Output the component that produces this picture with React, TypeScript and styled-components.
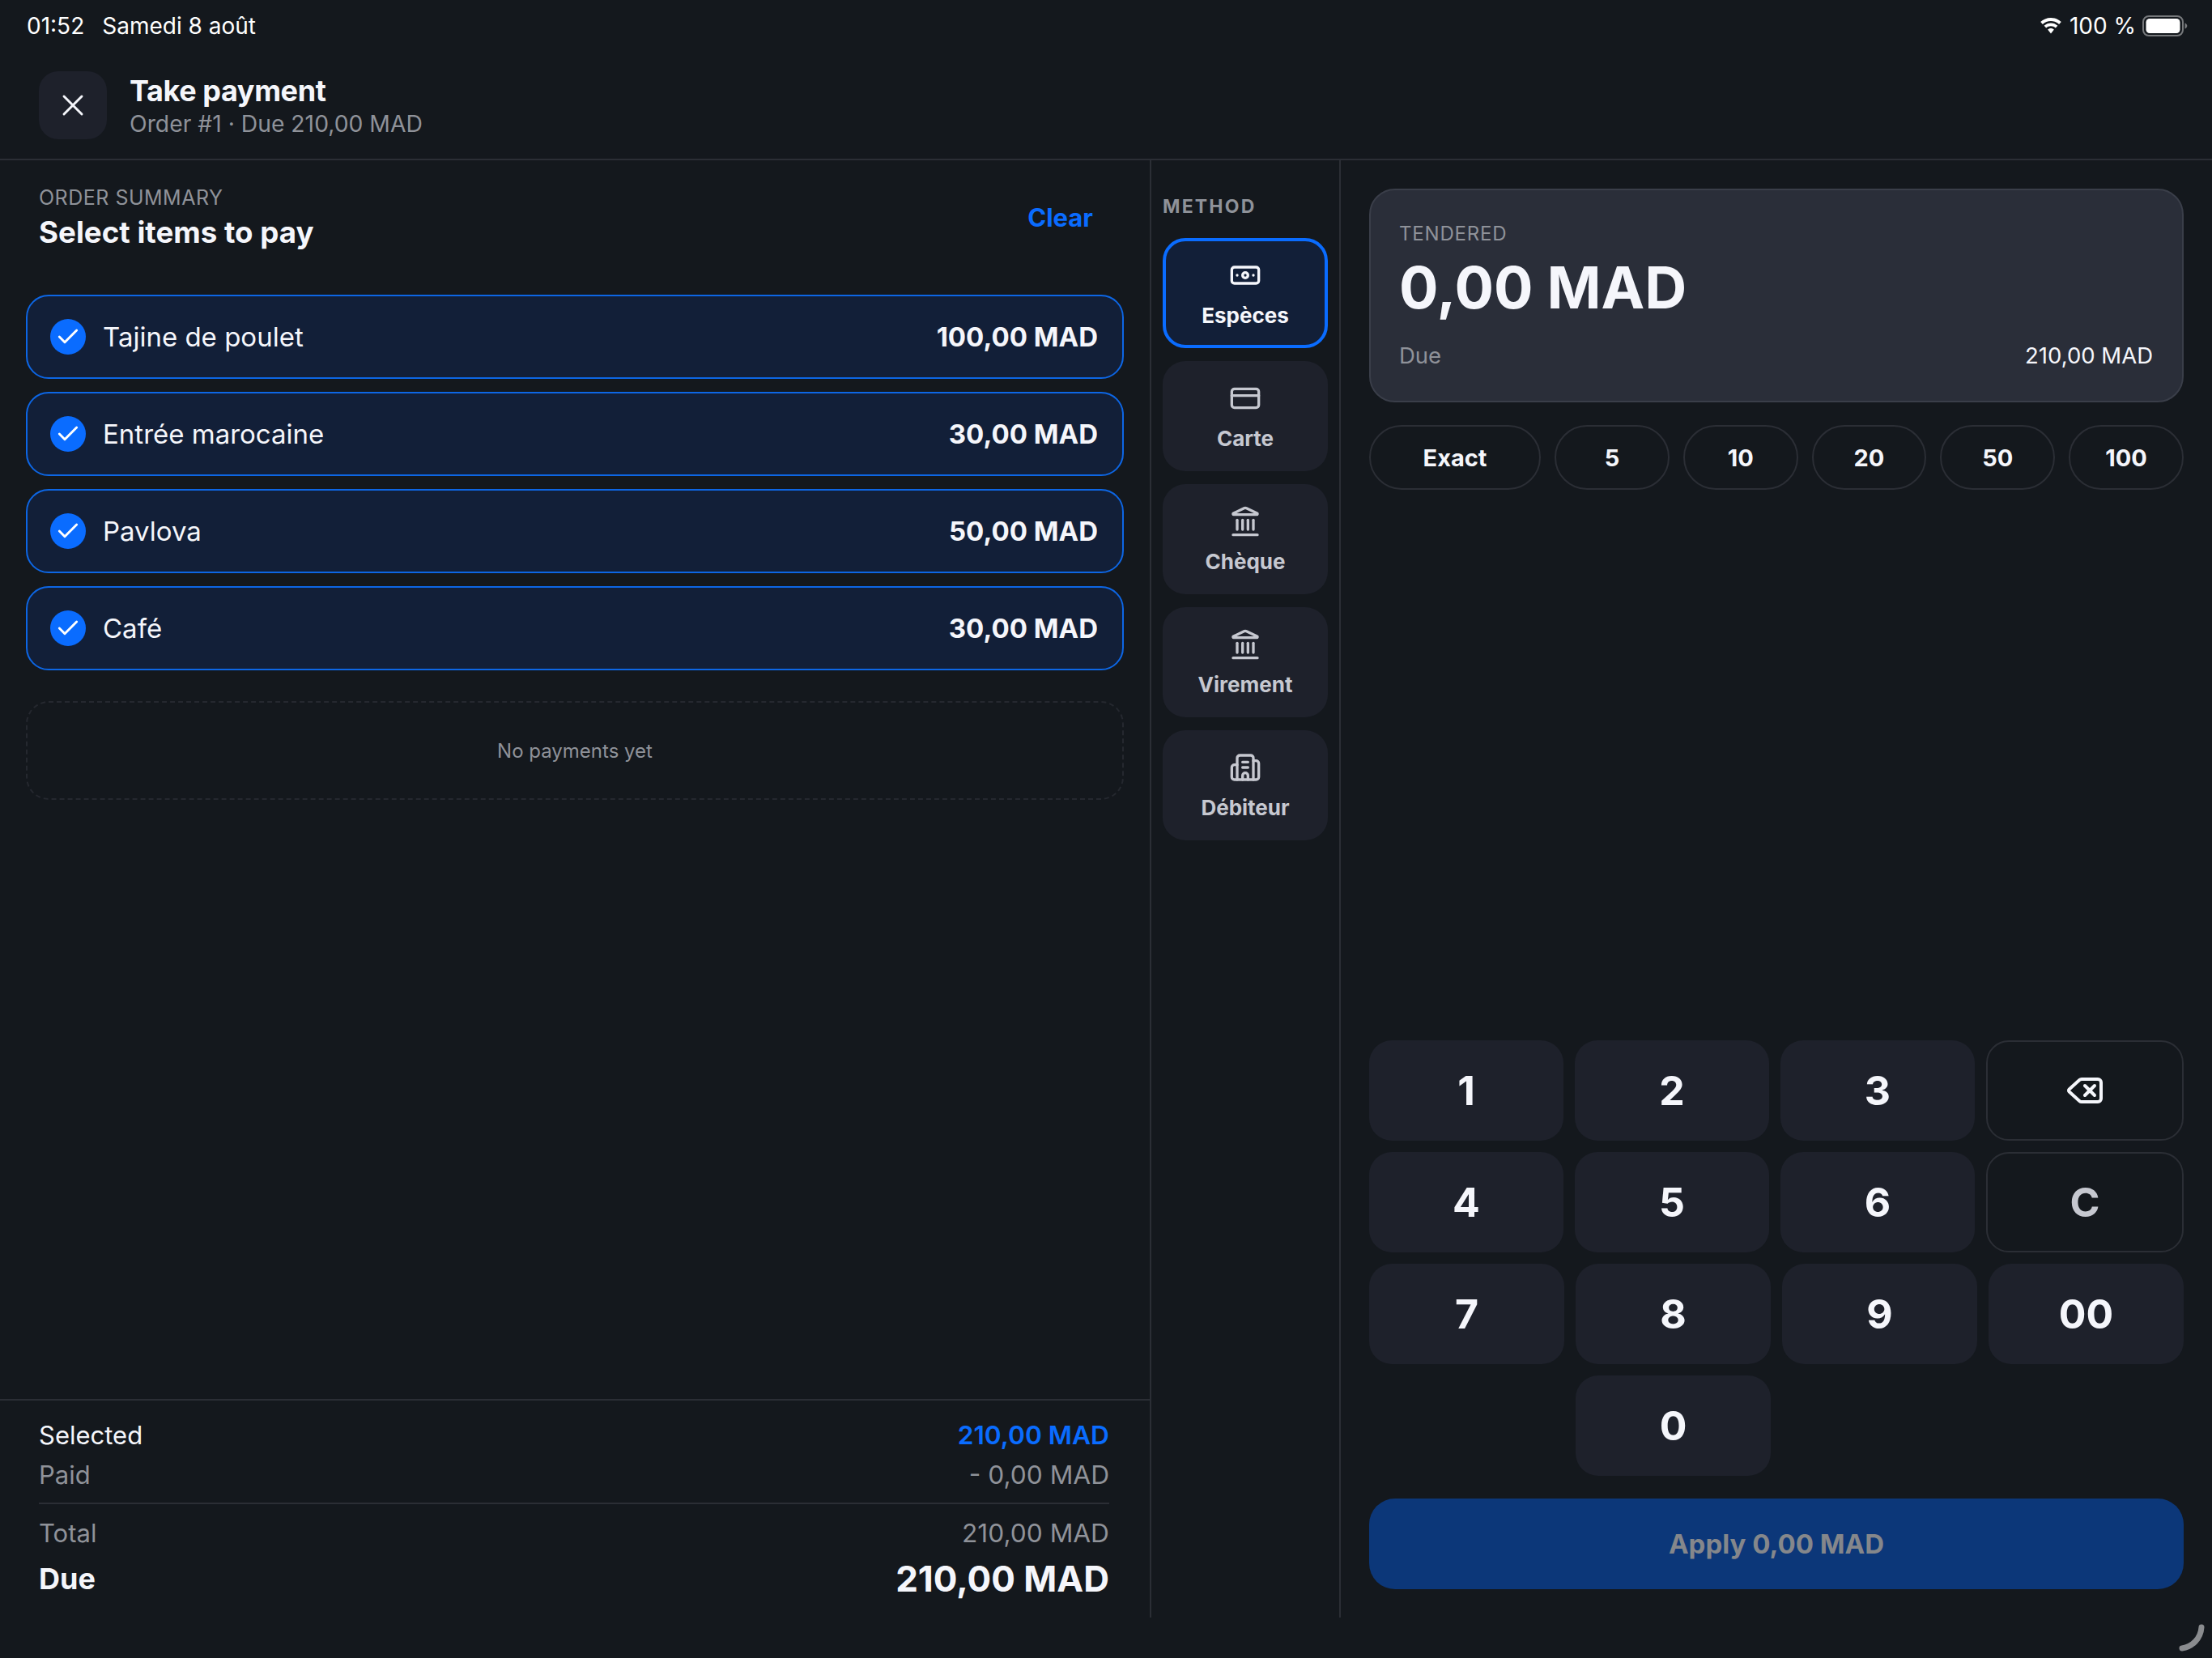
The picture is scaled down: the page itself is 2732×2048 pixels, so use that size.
import React from "react";
import styled, { createGlobalStyle } from "styled-components";
import { Banknote, Building2, Check, CreditCard, Delete, Landmark, X } from "lucide-react";

const Global = createGlobalStyle`
  html, body { margin: 0; padding: 0; background: #14181d; }
  * { box-sizing: border-box; }
`;

const Page = styled.div`
  width: 2732px; height: 2048px; background: #14181d; color: #f5f6fb; overflow: hidden;
  display: flex; flex-direction: column; position: relative;
  font-family: Inter, "Liberation Sans", sans-serif;
`;
const StatusBar = styled.div`
  height: 64px; padding: 0 30px 0 33px; display: flex; align-items: center; justify-content: space-between;
  font-size: 28px; color: #fff;
`;
const StatusGroup = styled.div`display: flex; align-items: center; gap: ${p => p.$gap}px;`;
const Header = styled.header`
  height: 134px; padding: 24px 48px 0; display: flex; gap: 28px; align-items: flex-start;
  border-bottom: 2px solid #2b2e35;
`;
const CloseButton = styled.div`
  width: 84px; height: 84px; border-radius: 24px; background: #1e212b; display: flex; align-items: center; justify-content: center;
`;
const HeaderText = styled.div`display: flex; flex-direction: column; padding-top: 2px;`;
const Title = styled.div`font-size: 36px; line-height: 44px; font-weight: 700; letter-spacing: -0.4px;`;
const Sub = styled.div`font-size: 28.3px; line-height: 38px; color: #8f9299;`;
const Main = styled.main`flex: none; height: 1800px; display: flex;`;
const LeftPanel = styled.section`
  width: 1422px; border-right: 2px solid #2b2e35; display: flex; flex-direction: column;
`;
const SummaryHead = styled.div`
  height: 166px; padding: 30px 70px 0 48px; display: flex; justify-content: space-between; align-items: flex-start;
`;
const Eyebrow = styled.div`font-size: 25px; line-height: 32px; letter-spacing: 0.5px; color: #8f9299;`;
const SummaryTitle = styled.div`font-size: 36.7px; line-height: 46px; font-weight: 700; margin-top: 4px;`;
const ClearLink = styled.div`font-size: 31px; font-weight: 700; color: #0a6cff; margin-top: 22px;`;
const Rows = styled.div`padding: 0 32px; display: flex; flex-direction: column; gap: 16px;`;
const Row = styled.div`
  height: 104px; border: 2px solid #0d66e4; border-radius: 28px; background: #121f38;
  display: flex; align-items: center; padding: 0 30px 0 28px;
`;
const CheckDot = styled.span`
  width: 44px; height: 44px; border-radius: 50%; background: #0a6cff; display: flex; align-items: center; justify-content: center;
`;
const RowName = styled.span`font-size: 33px; margin-left: 21px; flex: 1;`;
const RowPrice = styled.span`font-size: 33px; font-weight: 700;`;
const EmptyBox = styled.div`
  margin: 38px 32px 0; height: 122px; border: 2px dashed #25282f; border-radius: 28px;
  display: flex; align-items: center; justify-content: center; font-size: 24px; color: #8f9299;
`;
const Totals = styled.div`
  margin-top: auto; border-top: 2px solid #2b2e35; height: 270px; padding: 18px 50px 0 48px; display: flex; flex-direction: column;
`;
const TotalRow = styled.div`
  display: flex; justify-content: space-between; align-items: center; height: ${p => p.$h}px;
  font-size: ${p => p.$size}px; font-weight: ${p => p.$weight || 400}; color: ${p => p.$color || "#8f9299"};
`;
const Amount = styled.span`
  font-size: ${p => p.$size || 31.7}px; font-weight: ${p => p.$weight || 400}; color: ${p => p.$color || "inherit"};
`;
const TotalRule = styled.div`height: 2px; background: #2b2e35; margin: 10px 0 11px;`;
const MethodPanel = styled.aside`
  width: 234px; border-right: 2px solid #2b2e35; padding: 43px 14px 0 14px; display: flex; flex-direction: column;
`;
const MethodLabel = styled.div`
  font-size: 23px; line-height: 28px; font-weight: 700; letter-spacing: 2.2px; color: #8f9299; margin-bottom: 25px;
`;
const MethodList = styled.div`display: flex; flex-direction: column; gap: 16px;`;
const MethodButton = styled.div`
  width: 204px; height: 136px; border-radius: 28px; display: flex; flex-direction: column; align-items: center; justify-content: center; gap: 14px;
  background: ${p => p.$active ? "#121f38" : "#1e212b"};
  border: ${p => p.$active ? "4px solid #0a6cff" : "none"};
  color: ${p => p.$active ? "#f5f6fb" : "#c6c8d0"};
  font-size: 26px; font-weight: 700;
`;
const PadPanel = styled.section`flex: 1; padding: 35px 35px 0; display: flex; flex-direction: column;`;
const TenderCard = styled.div`
  height: 264px; border: 2px solid #3a3e49; border-radius: 32px; background: #2a2e39; padding: 38px 36px 0 35px;
  display: flex; flex-direction: column;
`;
const TenderLabel = styled.div`font-size: 24px; line-height: 32px; letter-spacing: 0.8px; color: #8f9299;`;
const TenderValue = styled.div`font-size: 72px; line-height: 92px; font-weight: 700; margin-top: 4px;`;
const TenderDue = styled.div`display: flex; justify-content: space-between; font-size: 27.5px; line-height: 38px; margin-top: 19px; color: #8f9299;`;
const TenderAmount = styled.span`color: #f5f6fb;`;
const Chips = styled.div`display: flex; gap: 17px; margin-top: 28px;`;
const Chip = styled.div`
  flex: ${p => p.$wide ? "0 0 212px" : "1"}; height: 80px; border: 2px solid #2b2e35; border-radius: 40px;
  display: flex; align-items: center; justify-content: center; font-size: 29px; font-weight: 700;
`;
const Keypad = styled.div`margin-top: auto; display: flex; flex-direction: column; gap: 14px;`;
const KeyRow = styled.div`display: flex; gap: 14px; height: 124px;`;
const Key = styled.div`
  flex: 1 1 0; border-radius: 28px; display: flex; align-items: center; justify-content: center; font-size: 50px; font-weight: 700;
  background: ${p => p.$ghost ? "transparent" : "#1e212b"};
  border: ${p => p.$ghost ? "2px solid #2b2e35" : "none"};
  color: ${p => p.$dim ? "#c6c8d0" : "#f5f6fb"};
`;
const KeySpacer = styled.div`flex: 1 1 0;`;
const ApplyButton = styled.div`
  height: 112px; margin-top: 28px; margin-bottom: 35px; border-radius: 32px; background: #0c3779; color: #85878b;
  display: flex; align-items: center; justify-content: center; font-size: 33px; font-weight: 700;
`;
const HomeArc = styled.svg`position: absolute; right: 8px; bottom: 6px;`;

const WifiIcon = () => (
  <svg width="30" height="22" viewBox="0 0 30 22" fill="#fff">
    <path d="M15 4.900c3.900 0 7.400 1.500 10.100 4l2.700-2.800C24.500 2.900 20 .900 15 .900S5.500 2.900 2.200 6.100l2.700 2.800c2.700-2.500 6.200-4 10.100-4z" />
    <path d="M15 11.300c2.200 0 4.200.8 5.800 2.200l2.600-2.700C21.100 8.700 18.200 7.500 15 7.500s-6.100 1.200-8.400 3.300l2.600 2.700c1.600-1.400 3.600-2.200 5.800-2.200z" />
    <path d="M15 14.100c-1.500 0-2.900.6-3.900 1.500L15 20.500l3.900-4.900c-1-.9-2.400-1.500-3.900-1.500z" />
  </svg>
);
const BatteryIcon = () => (
  <svg width="56" height="26" viewBox="0 0 56 26">
    <rect x="1" y="1" width="49" height="24" rx="7" fill="none" stroke="#77797c" strokeWidth="2" />
    <rect x="4.500" y="4" width="42" height="18" rx="4.500" fill="#fff" />
    <path d="M52.500 9.500c1.800.6 2.800 2 2.800 3.500s-1 2.900-2.800 3.500z" fill="#77797c" />
  </svg>
);

const items = [
  ["Tajine de poulet", "100,00 MAD"],
  ["Entrée marocaine", "30,00 MAD"],
  ["Pavlova", "50,00 MAD"],
  ["Café", "30,00 MAD"],
];
const methods = [
  { label: "Espèces", Icon: Banknote, active: true },
  { label: "Carte", Icon: CreditCard },
  { label: "Chèque", Icon: Landmark },
  { label: "Virement", Icon: Landmark },
  { label: "Débiteur", Icon: Building2 },
];
const chips = ["5", "10", "20", "50", "100"];

export default function App() {
  return (
    <Page>
      <Global />
      <StatusBar>
        <StatusGroup $gap={22}><span>01:52</span><span>Samedi 8 août</span></StatusGroup>
        <StatusGroup $gap={8}><WifiIcon /><span>100 %</span><BatteryIcon /></StatusGroup>
      </StatusBar>
      <Header>
        <CloseButton><X size={44} strokeWidth={1.6} color="#f5f6fb" /></CloseButton>
        <HeaderText>
          <Title>Take payment</Title>
          <Sub>Order #1 · Due 210,00 MAD</Sub>
        </HeaderText>
      </Header>
      <Main>
        <LeftPanel>
          <SummaryHead>
            <div>
              <Eyebrow>ORDER SUMMARY</Eyebrow>
              <SummaryTitle>Select items to pay</SummaryTitle>
            </div>
            <ClearLink>Clear</ClearLink>
          </SummaryHead>
          <Rows>
            {items.map(([name, price]) => (
              <Row key={name}>
                <CheckDot><Check size={32} strokeWidth={2.200} color="#fff" /></CheckDot>
                <RowName>{name}</RowName>
                <RowPrice>{price}</RowPrice>
              </Row>
            ))}
          </Rows>
          <EmptyBox>No payments yet</EmptyBox>
          <Totals>
            <TotalRow $h={48} $size={31} $color="#f5f6fb"><span>Selected</span><Amount $weight={600} $color="#0a6cff">210,00 MAD</Amount></TotalRow>
            <TotalRow $h={50} $size={31}><span>Paid</span><Amount>- 0,00 MAD</Amount></TotalRow>
            <TotalRule />
            <TotalRow $h={48} $size={31}><span>Total</span><Amount>210,00 MAD</Amount></TotalRow>
            <TotalRow $h={66} $size={36} $weight={700} $color="#f5f6fb"><span>Due</span><Amount $size={44} $weight={700}>210,00 MAD</Amount></TotalRow>
          </Totals>
        </LeftPanel>
        <MethodPanel>
          <MethodLabel>METHOD</MethodLabel>
          <MethodList>
            {methods.map(({ label, Icon, active }) => (
              <MethodButton key={label} $active={active}>
                <Icon size={40} strokeWidth={2} />
                <span>{label}</span>
              </MethodButton>
            ))}
          </MethodList>
        </MethodPanel>
        <PadPanel>
          <TenderCard>
            <TenderLabel>TENDERED</TenderLabel>
            <TenderValue>0,00 MAD</TenderValue>
            <TenderDue><span>Due</span><TenderAmount>210,00 MAD</TenderAmount></TenderDue>
          </TenderCard>
          <Chips>
            <Chip $wide>Exact</Chip>
            {chips.map(c => <Chip key={c}>{c}</Chip>)}
          </Chips>
          <Keypad>
            <KeyRow><Key>1</Key><Key>2</Key><Key>3</Key><Key $ghost><Delete size={48} strokeWidth={2} /></Key></KeyRow>
            <KeyRow><Key>4</Key><Key>5</Key><Key>6</Key><Key $ghost $dim>C</Key></KeyRow>
            <KeyRow><Key>7</Key><Key>8</Key><Key>9</Key><Key>00</Key></KeyRow>
            <KeyRow><KeySpacer /><Key>0</Key><KeySpacer /><KeySpacer /></KeyRow>
          </Keypad>
          <ApplyButton>Apply 0,00 MAD</ApplyButton>
        </PadPanel>
      </Main>
      <HomeArc width="34" height="36" viewBox="0 0 34 36">
        <path d="M29 4C28 18 18 28 5 30" fill="none" stroke="#8a8c8f" strokeWidth="7" strokeLinecap="round" />
      </HomeArc>
    </Page>
  );
}
